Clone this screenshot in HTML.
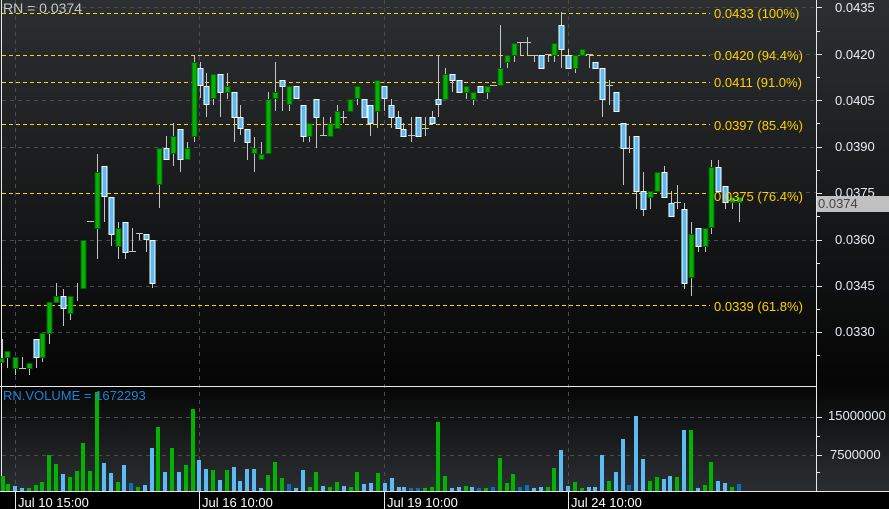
<!DOCTYPE html>
<html><head><meta charset="utf-8"><style>
html,body{margin:0;padding:0;background:#000;width:889px;height:509px;overflow:hidden}
svg{display:block;font-family:"Liberation Sans",sans-serif}
</style></head><body>
<svg width="889" height="509" viewBox="0 0 889 509" xmlns="http://www.w3.org/2000/svg">
<defs>
<linearGradient id="gm" x1="0" y1="0" x2="0" y2="1"><stop offset="0" stop-color="#2c2f32"/><stop offset="1" stop-color="#050505"/></linearGradient>
<linearGradient id="gv" x1="0" y1="0" x2="0" y2="1"><stop offset="0" stop-color="#060606"/><stop offset="1" stop-color="#2c2f32"/></linearGradient>
</defs>
<rect x="0" y="0" width="889" height="386" fill="url(#gm)"/>
<rect x="0" y="386" width="889" height="105" fill="url(#gv)"/>
<rect x="0" y="491" width="889" height="18" fill="#000"/>
<!-- grid -->
<g stroke="#4a4c4f" stroke-width="1" stroke-dasharray="4,4" fill="none" shape-rendering="crispEdges">
<path d="M2 7.5H816M2 100.5H816M2 147.5H816M2 240.5H816M2 286.5H816M2 332.5H816"/>
<path d="M710 54.5H816M710 192.5H816"/>
<path d="M15.5 0V491M199.5 0V491M384.5 0V491M568.5 0V491"/>
<path d="M2 417.5H816M2 455.5H816"/>
</g>
<!-- fib lines -->
<g stroke="#ffd400" stroke-width="1" stroke-dasharray="4,3" fill="none" shape-rendering="crispEdges">
<path d="M2 13.5H710"/><path d="M2 55.5H710"/><path d="M2 82.5H710"/><path d="M2 124.5H710"/><path d="M2 193.5H710"/><path d="M2 305.5H710"/>
</g>
<!-- axes -->
<g stroke="#e8e8e8" stroke-width="1" fill="none">
<path d="M1.5 0V491M816.5 0V491M0 386.5H816M0 491.5H889"/>
<path d="M816 7.5h6M816 31.5h4M816 54.5h6M816 77.5h4M816 100.5h6M816 123.5h4M816 147.5h6M816 170.5h4M816 193.5h6M816 216.5h4M816 240.5h6M816 263.5h4M816 286.5h6M816 309.5h4M816 332.5h6M816 355.5h4"/>
<path d="M816 417.5h6M816 436.5h4M816 455.5h6M816 472.5h4"/>
<path d="M15.5 491V509M199.5 491V509M384.5 491V509M568.5 491V509"/>
</g>
<!-- wicks -->
<g stroke="#c4c4c4" stroke-width="1" fill="none">
<path d="M2.5 339V358M7.5 351V368M15.5 357V375M22.5 357V368M29.5 363V375M36.5 339V368M42.5 333V362M49.5 302V344M56.5 283V302M63.5 289V326M70.5 296V320M77.5 283V301M83.5 240V288M97.5 154V259M104.5 166V222M111.5 197V246M118.5 222V259M125.5 222V259M132.5 228V251M139.5 233V240M146.5 234V252M152.5 240V288M159.5 148V208M166.5 136V159M173.5 123V166M180.5 129V172M187.5 142V159M194.5 55V142M200.5 62V98M206.5 73V117M213.5 74V105M220.5 74V117M227.5 73V99M234.5 92V142M240.5 105V135M247.5 129V160M254.5 137V172M261.5 142V159M268.5 92V153M275.5 62V111M282.5 80V111M289.5 86V111M303.5 105V142M309.5 123V142M316.5 99V148M323.5 117V135M330.5 117V136M337.5 105V128M343.5 111V123M350.5 99V111M357.5 86V105M370.5 105V136M377.5 80V128M384.5 86V111M391.5 99V128M398.5 111V128M403.5 123V136M411.5 117V142M418.5 117V136M425.5 117V136M432.5 111V123M438.5 55V117M445.5 68V99M452.5 74V92M466.5 86V99M473.5 92V105M487.5 86V99M500.5 25V85M507.5 55V68M514.5 43V62M520.5 42V55M527.5 37V55M534.5 55V62M548.5 54V62M554.5 43V62M561.5 12V68M568.5 49V68M575.5 55V73M589.5 54V68M602.5 68V117M609.5 80V105M623.5 123V185M629.5 136V153M636.5 136V209M643.5 172V216M650.5 191V209M664.5 166V197M671.5 191V216M677.5 185V209M684.5 203V289M691.5 222V296M698.5 228V252M705.5 228V252M711.5 160V234M718.5 160V191M725.5 186V209M732.5 197V209M739.5 197V222"/>
<path d="M19 368.5h7M87 221.5h7M129 251.5h7M136 233.5h7M320 135.5h7M340 117.5h7M408 135.5h7M422 128.5h7M490 85.5h7M517 42.5h7M524 42.5h7M531 55.5h7M545 54.5h7M586 54.5h7M606 85.5h7M626 148.5h7M674 202.5h7"/>
</g>
<!-- green bodies -->
<g fill="#00b400" stroke="#0c5a0c" stroke-width="1">
<rect x="0" y="358.5" width="4" height="4"/>
<rect x="5" y="351.5" width="5" height="6"/><rect x="13" y="357.5" width="5" height="11"/><rect x="27" y="363.5" width="5" height="5"/><rect x="40" y="333.5" width="5" height="24"/><rect x="47" y="302.5" width="5" height="31"/><rect x="54" y="296.5" width="5" height="6"/><rect x="68" y="296.5" width="5" height="17"/><rect x="81" y="240.5" width="5" height="48"/><rect x="95" y="172.5" width="5" height="56"/><rect x="116" y="228.5" width="5" height="18"/><rect x="157" y="148.5" width="5" height="36"/><rect x="171" y="136.5" width="5" height="17"/><rect x="185" y="148.5" width="5" height="11"/><rect x="192" y="62.5" width="5" height="74"/><rect x="211" y="74.5" width="5" height="24"/><rect x="225" y="86.5" width="5" height="6"/><rect x="252" y="148.5" width="5" height="5"/><rect x="259" y="154.5" width="5" height="5"/><rect x="266" y="99.5" width="5" height="54"/><rect x="273" y="92.5" width="5" height="6"/><rect x="287" y="86.5" width="5" height="18"/><rect x="307" y="123.5" width="5" height="13"/><rect x="328" y="123.5" width="5" height="13"/><rect x="335" y="111.5" width="5" height="17"/><rect x="348" y="99.5" width="5" height="12"/><rect x="355" y="86.5" width="5" height="12"/><rect x="375" y="80.5" width="5" height="31"/><rect x="443" y="74.5" width="5" height="25"/><rect x="464" y="86.5" width="5" height="6"/><rect x="471" y="92.5" width="5" height="7"/><rect x="485" y="86.5" width="5" height="6"/><rect x="498" y="68.5" width="5" height="17"/><rect x="505" y="55.5" width="5" height="7"/><rect x="512" y="43.5" width="5" height="12"/><rect x="552" y="43.5" width="5" height="12"/><rect x="573" y="55.5" width="5" height="13"/><rect x="580" y="49.5" width="5" height="6"/><rect x="648" y="191.5" width="5" height="6"/><rect x="655" y="172.5" width="5" height="19"/><rect x="689" y="234.5" width="5" height="43"/><rect x="703" y="228.5" width="5" height="18"/><rect x="709" y="167.5" width="5" height="60"/><rect x="730" y="197.5" width="5" height="5"/><rect x="737" y="197.5" width="5" height="5"/>
</g>
<!-- blue bodies -->
<g fill="#5bbcf5" stroke="#ffffff" stroke-width="1">
<rect x="34" y="339.5" width="5" height="18"/><rect x="61" y="296.5" width="5" height="12"/><rect x="102" y="166.5" width="5" height="30"/><rect x="109" y="197.5" width="5" height="37"/><rect x="123" y="222.5" width="5" height="30"/><rect x="144" y="234.5" width="5" height="5"/><rect x="150" y="240.5" width="5" height="43"/><rect x="164" y="148.5" width="5" height="11"/><rect x="178" y="129.5" width="5" height="30"/><rect x="198" y="68.5" width="5" height="17"/><rect x="204" y="86.5" width="5" height="18"/><rect x="218" y="74.5" width="5" height="18"/><rect x="232" y="92.5" width="5" height="25"/><rect x="238" y="117.5" width="5" height="11"/><rect x="245" y="129.5" width="5" height="13"/><rect x="280" y="80.5" width="5" height="6"/><rect x="294" y="86.5" width="5" height="12"/><rect x="301" y="105.5" width="5" height="31"/><rect x="314" y="99.5" width="5" height="18"/><rect x="362" y="99.5" width="5" height="18"/><rect x="368" y="105.5" width="5" height="18"/><rect x="382" y="86.5" width="5" height="12"/><rect x="389" y="105.5" width="5" height="12"/><rect x="396" y="117.5" width="5" height="11"/><rect x="401" y="129.5" width="5" height="7"/><rect x="416" y="117.5" width="5" height="19"/><rect x="430" y="117.5" width="5" height="6"/><rect x="436" y="99.5" width="5" height="5"/><rect x="450" y="74.5" width="5" height="6"/><rect x="457" y="80.5" width="5" height="12"/><rect x="478" y="86.5" width="5" height="6"/><rect x="539" y="55.5" width="5" height="13"/><rect x="559" y="25.5" width="5" height="24"/><rect x="566" y="55.5" width="5" height="13"/><rect x="593" y="62.5" width="5" height="6"/><rect x="600" y="68.5" width="5" height="31"/><rect x="614" y="92.5" width="5" height="19"/><rect x="621" y="123.5" width="5" height="25"/><rect x="634" y="136.5" width="5" height="55"/><rect x="641" y="191.5" width="5" height="18"/><rect x="662" y="172.5" width="5" height="25"/><rect x="669" y="203.5" width="5" height="13"/><rect x="682" y="209.5" width="5" height="74"/><rect x="696" y="228.5" width="5" height="18"/><rect x="716" y="167.5" width="5" height="24"/><rect x="723" y="186.5" width="5" height="16"/>
</g>
<!-- volume bars -->
<g fill="#00b400">
<rect x="1" y="476" width="4" height="15"/><rect x="6" y="484" width="4" height="7"/><rect x="27" y="488" width="4" height="3"/><rect x="34" y="485" width="4" height="6"/><rect x="40" y="482" width="4" height="9"/><rect x="47" y="455" width="4" height="36"/><rect x="54" y="464" width="4" height="27"/><rect x="68" y="477" width="4" height="14"/><rect x="75" y="471" width="4" height="20"/><rect x="81" y="443" width="4" height="48"/><rect x="88" y="471" width="4" height="20"/><rect x="95" y="392" width="4" height="99"/><rect x="116" y="482" width="4" height="9"/><rect x="136" y="487" width="4" height="4"/><rect x="156" y="427" width="4" height="64"/><rect x="170" y="448" width="4" height="43"/><rect x="184" y="465" width="4" height="26"/><rect x="191" y="409" width="4" height="82"/><rect x="211" y="470" width="4" height="21"/><rect x="225" y="470" width="4" height="21"/><rect x="266" y="475" width="4" height="16"/><rect x="273" y="462" width="4" height="29"/><rect x="280" y="478" width="4" height="13"/><rect x="308" y="487" width="4" height="4"/><rect x="314" y="472" width="4" height="19"/><rect x="328" y="487" width="4" height="4"/><rect x="335" y="482" width="4" height="9"/><rect x="349" y="487" width="4" height="4"/><rect x="355" y="472" width="4" height="19"/><rect x="376" y="473" width="4" height="18"/><rect x="423" y="488" width="4" height="3"/><rect x="430" y="487" width="4" height="4"/><rect x="436" y="422" width="4" height="69"/><rect x="443" y="476" width="4" height="15"/><rect x="464" y="486" width="4" height="5"/><rect x="484" y="488" width="4" height="3"/><rect x="498" y="458" width="4" height="33"/><rect x="505" y="483" width="4" height="8"/><rect x="511" y="474" width="4" height="17"/><rect x="546" y="487" width="4" height="4"/><rect x="552" y="468" width="4" height="23"/><rect x="573" y="482" width="4" height="9"/><rect x="580" y="488" width="4" height="3"/><rect x="607" y="481" width="4" height="10"/><rect x="648" y="481" width="4" height="10"/><rect x="655" y="477" width="4" height="14"/><rect x="675" y="477" width="4" height="14"/><rect x="689" y="430" width="4" height="61"/><rect x="703" y="485" width="4" height="6"/><rect x="709" y="462" width="4" height="29"/><rect x="730" y="487" width="4" height="4"/>
</g>
<g fill="#5bbcf5">
<rect x="13" y="486" width="4" height="5"/><rect x="20" y="488" width="4" height="3"/><rect x="61" y="474" width="4" height="17"/><rect x="102" y="463" width="4" height="28"/><rect x="109" y="473" width="4" height="18"/><rect x="122" y="465" width="4" height="26"/><rect x="143" y="485" width="4" height="6"/><rect x="150" y="448" width="4" height="43"/><rect x="163" y="472" width="4" height="19"/><rect x="177" y="472" width="4" height="19"/><rect x="197" y="460" width="4" height="31"/><rect x="204" y="469" width="4" height="22"/><rect x="218" y="480" width="4" height="11"/><rect x="232" y="467" width="4" height="24"/><rect x="238" y="481" width="4" height="10"/><rect x="245" y="469" width="4" height="22"/><rect x="252" y="469" width="4" height="22"/><rect x="259" y="488" width="4" height="3"/><rect x="294" y="488" width="4" height="3"/><rect x="301" y="470" width="4" height="21"/><rect x="321" y="486" width="4" height="5"/><rect x="342" y="486" width="4" height="5"/><rect x="362" y="484" width="4" height="7"/><rect x="369" y="483" width="4" height="8"/><rect x="383" y="483" width="4" height="8"/><rect x="390" y="478" width="4" height="13"/><rect x="397" y="487" width="4" height="4"/><rect x="402" y="487" width="4" height="4"/><rect x="450" y="488" width="4" height="3"/><rect x="457" y="487" width="4" height="4"/><rect x="470" y="487" width="4" height="4"/><rect x="532" y="488" width="4" height="3"/><rect x="539" y="487" width="4" height="4"/><rect x="559" y="450" width="4" height="41"/><rect x="566" y="486" width="4" height="5"/><rect x="587" y="487" width="4" height="4"/><rect x="593" y="487" width="4" height="4"/><rect x="600" y="455" width="4" height="36"/><rect x="614" y="472" width="4" height="19"/><rect x="621" y="439" width="4" height="52"/><rect x="634" y="416" width="4" height="75"/><rect x="641" y="459" width="4" height="32"/><rect x="662" y="479" width="4" height="12"/><rect x="668" y="476" width="4" height="15"/><rect x="682" y="430" width="4" height="61"/><rect x="696" y="488" width="4" height="3"/><rect x="716" y="481" width="4" height="10"/><rect x="723" y="483" width="4" height="8"/>
</g>
<g fill="#0b6fc0">
<rect x="129" y="483" width="4" height="8"/><rect x="287" y="484" width="4" height="7"/><rect x="409" y="488" width="4" height="3"/><rect x="416" y="488" width="4" height="3"/><rect x="477" y="488" width="4" height="3"/><rect x="491" y="487" width="4" height="4"/><rect x="518" y="487" width="4" height="4"/><rect x="525" y="485" width="4" height="6"/><rect x="627" y="485" width="4" height="6"/><rect x="737" y="484" width="4" height="7"/>
</g>
<!-- fib labels -->
<g fill="#ffd000" font-size="13">
<text x="714" y="18">0.0433 (100%)</text>
<text x="714" y="60">0.0420 (94.4%)</text>
<text x="714" y="87">0.0411 (91.0%)</text>
<text x="714" y="130">0.0397 (85.4%)</text>
<text x="714" y="201">0.0375 (76.4%)</text>
<text x="714" y="311">0.0339 (61.8%)</text>
</g>
<!-- price axis labels -->
<g fill="#e6ecf4" font-size="13">
<text x="835" y="12">0.0435</text>
<text x="835" y="59">0.0420</text>
<text x="835" y="105">0.0405</text>
<text x="835" y="151">0.0390</text>
<text x="835" y="197">0.0375</text>
<text x="835" y="244">0.0360</text>
<text x="835" y="290">0.0345</text>
<text x="835" y="336">0.0330</text>
<text x="828" y="420">15000000</text>
<text x="830" y="459">7500000</text>
</g>
<rect x="817" y="196" width="72" height="16" fill="#c0c0c0"/>
<text x="818" y="208" fill="#444" font-size="13">0.0374</text>
<text x="3" y="13" fill="#c4c8cc" font-size="14">RN = 0.0374</text>
<text x="3" y="400" fill="#1e82d6" font-size="13">RN.VOLUME = 1672293</text>
<g fill="#ffffff" font-size="13">
<text x="18" y="507">Jul 10 15:00</text>
<text x="202" y="507">Jul 16 10:00</text>
<text x="387" y="507">Jul 19 10:00</text>
<text x="571" y="507">Jul 24 10:00</text>
</g>
</svg>
</body></html>
